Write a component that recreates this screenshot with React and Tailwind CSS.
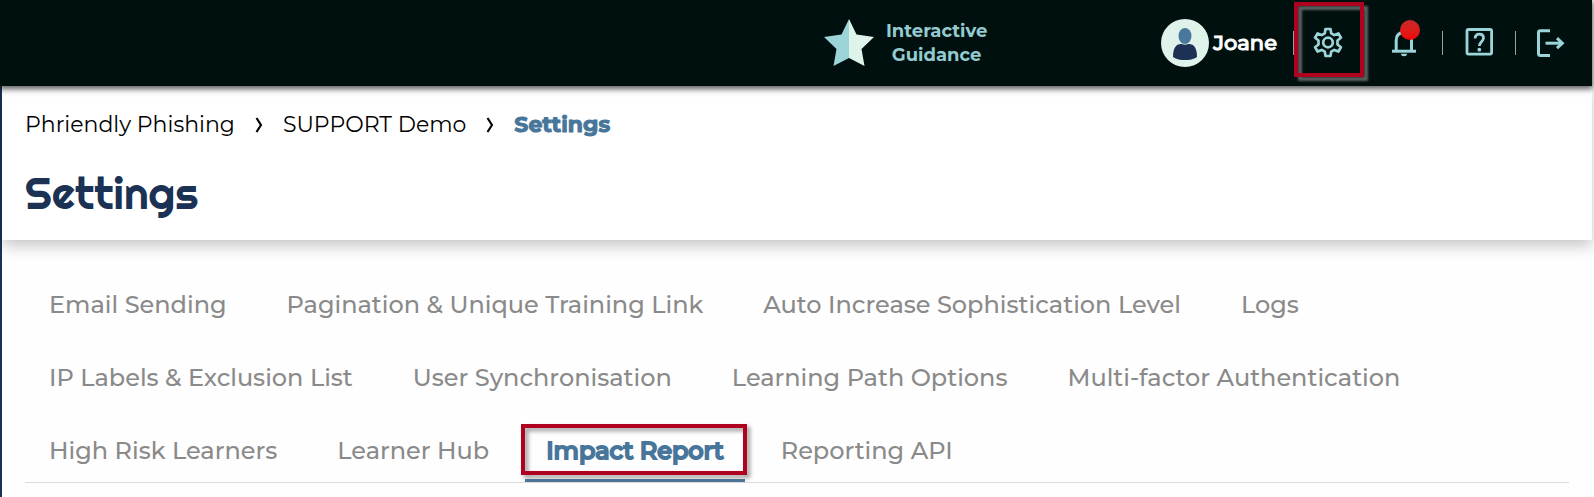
import React, { useState } from 'react';

const TABS = [
    'Email Sending',
    'Pagination & Unique Training Link',
    'Auto Increase Sophistication Level',
    'Logs',
    'IP Labels & Exclusion List',
    'User Synchronisation',
    'Learning Path Options',
    'Multi-factor Authentication',
    'High Risk Learners',
    'Learner Hub',
    'Impact Report',
    'Reporting API',
];

function StarLogo() {
    return (
        <svg viewBox="0 0 50 48" className="w-[50px] h-12" aria-hidden="true">
            <path d="M25 0 L17.5 15.5 L0 18 L12.5 30 L9.5 47 L25 39 Z" fill="#9bd5da" />
            <path d="M25 0 L32.5 15.5 L50 18 L37.5 30 L40.5 47 L25 39 Z" fill="#def3ea" />
        </svg>
    );
}

function Avatar() {
    return (
        <svg viewBox="0 0 48 48" className="w-12 h-12" aria-hidden="true">
            <circle cx="24" cy="24" r="24" fill="#dff3eb" />
            <path d="M12 38 C12 29 15 25 20 25 H28 C33 25 36 29 36 38 C33 40.500 28 41 24 41 C20 41 15 40.500 12 38 Z" fill="#1c3153" />
            <ellipse cx="24" cy="17" rx="7.200" ry="8.700" fill="#dff3eb" />
            <ellipse cx="24" cy="17" rx="6.500" ry="8" fill="#4a789c" />
        </svg>
    );
}

function GearIcon() {
    return (
        <svg viewBox="0 0 32 32" className="w-8 h-8" fill="none" stroke="#9bd5da" strokeWidth="2.700" strokeLinejoin="round" aria-hidden="true">
            <path d="M13.500 2 H18.500 L19.200 6.300 L22.300 8.100 L26.400 6.500 L28.900 10.800 L25.500 13.500 V17.500 L28.900 20.200 L26.400 24.500 L22.300 22.900 L19.200 24.700 L18.500 29 H13.500 L12.800 24.700 L9.700 22.900 L5.600 24.500 L3.100 20.200 L6.500 17.500 V13.500 L3.100 10.800 L5.600 6.500 L9.700 8.100 L12.800 6.300 Z" />
            <circle cx="16" cy="15.500" r="4.800" />
        </svg>
    );
}

function BellIcon() {
    return (
        <svg viewBox="0 0 32 32" className="w-8 h-8" fill="none" stroke="#9bd5da" strokeWidth="3" aria-hidden="true">
            <path d="M4 24.200 H28" />
            <path d="M8.200 24 V13.500 C8.200 8.500 11 5.500 16 5.500 C21 5.500 23.500 8.500 23.500 13.500 V24" />
            <path d="M13 26.800 H19 C19 28.600 17.700 29.300 16 29.300 C14.300 29.300 13 28.600 13 26.800 Z" fill="#9bd5da" stroke="none" />
        </svg>
    );
}

function HelpIcon() {
    return (
        <svg viewBox="0 0 32 32" className="w-8 h-8" fill="none" stroke="#9bd5da" strokeWidth="2.800" aria-hidden="true">
            <rect x="4" y="2.500" width="24.600" height="24.600" rx="1.500" />
            <path d="M12.100 11.500 C12.100 8.500 13.800 7.100 16.300 7.100 C18.800 7.100 20.500 8.700 20.500 11 C20.500 14.500 16.300 15 16.300 19" />
            <circle cx="16.300" cy="22.700" r="1.900" fill="#9bd5da" stroke="none" />
        </svg>
    );
}

function LogoutIcon() {
    return (
        <svg viewBox="0 0 32 32" className="w-8 h-8" fill="none" stroke="#9bd5da" strokeWidth="3" aria-hidden="true">
            <path d="M14 3.800 H4.500 C3.100 3.800 2.500 4.500 2.500 5.500 V26.500 C2.500 27.900 3.100 28.600 4.500 28.600 H14" />
            <path d="M9.500 16.200 H26" />
            <path d="M21 11.200 L26.300 16.200 L21 21.200" />
        </svg>
    );
}

function Divider() {
    return <span className="w-px h-6 bg-[#9a9f9f]" />;
}

function Chevron() {
    return (
        <svg viewBox="0 0 8 16" className="w-2 h-4" fill="none" stroke="#000" strokeWidth="2.200" aria-hidden="true">
            <path d="M1.500 1 L6 8 L1.500 15" strokeLinejoin="round" />
        </svg>
    );
}

export default function App() {
    const [active, setActive] = useState('Impact Report');

    return (
        <div className="min-h-screen bg-[#fefefe] font-['Montserrat','Inter',sans-serif]">
            <header className="relative z-20 mr-0.5 h-[86px] bg-[#00100f] pr-6 flex items-center justify-end shadow-[0_2px_6px_1px_rgba(0,0,0,0.65)]">
                <a href="#guidance" className="mr-[174px] flex items-center gap-3 text-lg leading-6 font-bold text-center text-[#93cbd0]">
                    <StarLogo />
                    <span>Interactive<br />Guidance</span>
                </a>
                <div className="flex items-center gap-5">
                    <button className="-mr-1 flex items-center gap-1 text-[21px] font-medium [-webkit-text-stroke:1px] text-white">
                        <Avatar />
                        Joane
                    </button>
                    <Divider />
                    <button aria-label="Settings" className="relative -ml-0.5">
                        <GearIcon />
                        <span className="absolute -left-[18px] -top-[25px] w-[70px] h-[75px] border-4 border-[#ae0220] drop-shadow-[4px_4px_1px_rgba(130,130,130,0.7)]" />
                    </button>
                    <button aria-label="Notifications" className="relative ml-6 mr-0.5">
                        <BellIcon />
                        <span className="absolute left-3 -top-[7px] w-5 h-5 rounded-full bg-linear-to-b from-[#c62828] to-[#f20000]" />
                    </button>
                    <Divider />
                    <button aria-label="Help"><HelpIcon /></button>
                    <Divider />
                    <button aria-label="Log out"><LogoutIcon /></button>
                </div>
            </header>

            <main className="mr-0.5 min-h-[calc(100vh-86px)] border-l-2 border-[#1b3254]">
                <div className="relative z-10 bg-white px-[23px] h-[154px] shadow-[0_6px_14px_rgba(0,0,0,0.22)]">
                    <nav aria-label="Breadcrumb" className="flex items-center gap-5 pt-[25px] text-[22px] leading-7 text-black">
                        <a href="#home">Phriendly Phishing</a>
                        <Chevron />
                        <a href="#demo">SUPPORT Demo</a>
                        <Chevron />
                        <a href="#settings" className="font-bold [-webkit-text-stroke:1px] text-[#48759a]">Settings</a>
                    </nav>
                    <h1 className="mt-[26px] text-[44px] leading-[56px] font-normal font-['Righteous','Montserrat',sans-serif] text-[#1b3254]">Settings</h1>
                </div>

                <div className="mx-[23px] pt-[27px] border-b border-[#dcdcdc]">
                    <div role="tablist" className="flex flex-wrap gap-x-3 gap-y-1">
                        {TABS.map((tab) => (
                            <button
                                key={tab}
                                role="tab"
                                aria-selected={tab === active}
                                onClick={() => setActive(tab)}
                                className={`relative h-[69px] pt-2.5 border-b-[3px] text-2xl font-medium whitespace-nowrap ${tab === active
                                    ? 'px-[21px] border-[#48759a] text-[#48759a] [-webkit-text-stroke:2px]'
                                    : 'px-6 border-transparent text-[#8a8a8a]'
                                    }`}
                            >
                                {tab}
                                {tab === active && (
                                    <span className="absolute -left-1 top-[11px] w-[calc(100%+6px)] h-[51px] border-4 border-[#ae0220] drop-shadow-[3px_3px_2px_rgba(110,110,110,0.7)]" />
                                )}
                            </button>
                        ))}
                    </div>
                </div>
            </main>
        </div>
    );
}
